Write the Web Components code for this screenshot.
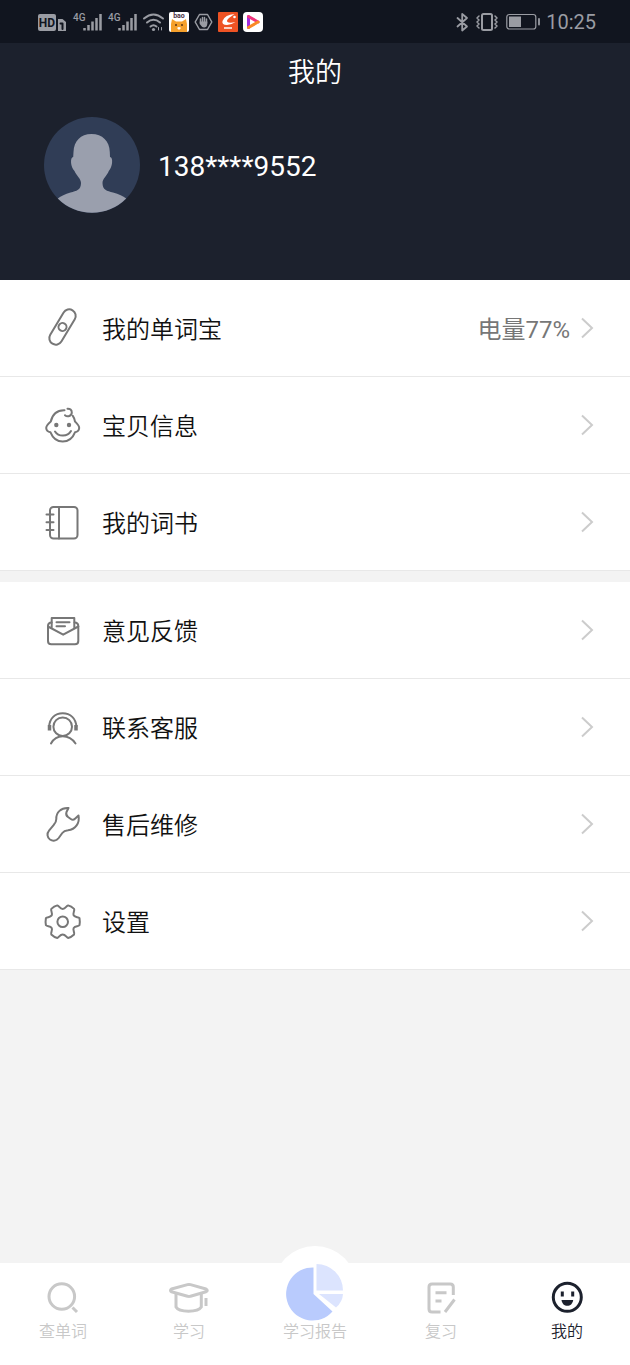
<!DOCTYPE html>
<html lang="zh-CN">
<head>
<meta charset="utf-8">
<meta name="viewport" content="width=device-width, initial-scale=1">
<title>我的</title>
<style>
  html, body { margin: 0; }
  body {
    font-family: Roboto, "Noto Sans CJK SC", sans-serif;
    background: #f3f3f3;
  }
</style>
</head>
<body>
<profile-page>
  <status-bar slot="top" time="10:25"></status-bar>
  <profile-header slot="top" heading="我的" name="138****9552"></profile-header>

  <menu-group>
    <menu-row icon="pen" href="#device" label="我的单词宝">电量77%</menu-row>
    <menu-row icon="baby" href="#baby" label="宝贝信息"></menu-row>
    <menu-row icon="book" href="#books" label="我的词书"></menu-row>
  </menu-group>
  <menu-group>
    <menu-row icon="mail" href="#feedback" label="意见反馈"></menu-row>
    <menu-row icon="service" href="#service" label="联系客服"></menu-row>
    <menu-row icon="wrench" href="#repair" label="售后维修"></menu-row>
    <menu-row icon="gear" href="#settings" label="设置"></menu-row>
  </menu-group>

  <tab-bar slot="bottom">
    <tab-item icon="search" href="#search">查单词</tab-item>
    <tab-item icon="study" href="#study">学习</tab-item>
    <tab-item icon="report" href="#report" raised>学习报告</tab-item>
    <tab-item icon="review" href="#review">复习</tab-item>
    <tab-item icon="me" href="#me" active>我的</tab-item>
  </tab-bar>
</profile-page>

<script>
const ICONS = {
  // menu icons, 36x36
  pen: [36, 36, `
    <g transform="translate(18.5 17) rotate(31)">
      <rect x="-6.5" y="-19.500" width="13" height="39" rx="6.5"/><circle r="4"/>
    </g>`],
  baby: [36, 36, `
    <path d="M20.500 3.200C13.500 3 8.500 7 6.800 14.500C4.500 16.500 2.200 18.500 2.200 21C2.400 23.800 4.500 25 6.500 25.300C9 31.500 13.500 34.500 18.700 34.500S28.500 31.500 31 25.300C33 25 35 23.800 35.200 21C35.200 18.500 33 16.500 31 14.500C30.600 12 29.800 10.200 28.800 8.800"/>
    <path d="M21 8.200C23.500 10.500 27.800 9 27.800 5.500C27.800 3 26 1.500 23.500 1.700"/>
    <path d="M11 24.500C14.500 30 23.500 30 27 24"/>
    <g fill="currentColor" stroke="none"><circle cx="12.300" cy="18" r="2.200"/><circle cx="25" cy="18" r="2.200"/></g>`],
  book: [36, 36, `
    <rect x="6" y="3" width="27.500" height="31.500" rx="3.500"/>
    <path d="M15 3V34.500M2.500 10.500H9.500M2.500 18.200H9.500M2.500 26H9.500"/>`],
  mail: [36, 36, `
    <path d="M7.700 10.500C5.500 10.500 4 12 4 14V29C4 31 5.300 32.300 7.300 32.300H31C33 32.300 34.300 31 34.300 29V14C34.300 12 33 10.500 30.500 10.500"/>
    <path d="M4 14.500L19.200 22.700L34.300 14.500M7.700 16V6H30.300V16M12.500 10.200H25.500M12.500 14.200H21"/>`],
  service: [36, 36, `
    <circle cx="18.700" cy="17.700" r="9.300"/>
    <path d="M5.200 17.500C5.500 9.500 11 4.300 18.700 4.300S32 9.500 32.300 17.500M7 34.500C9.500 30 13.500 27.300 18.700 27.300S28.500 30 31.500 34.500"/>
    <path d="M5.500 16V21.500M32 16V21.500" stroke-width="3.500" stroke-linecap="butt"/>`],
  wrench: [36, 36, `
    <path d="M24.500 2C17 1.500 12 6.500 12.300 13C12.300 15.500 11.500 17 9.800 18.800L5.200 24.300C2.500 27.500 3.200 31.500 6 33.500C9 35.500 12.500 34.800 14.700 32L18.300 27C19.800 25 21.500 24.500 24 24.300C31.500 23.500 36 17 34.500 9.500L31 12.800C29.800 13.900 28.200 14 26.800 13L24 11C22.200 9.700 21.800 8 22.500 6Z"/>`],
  gear: [36, 36, `
    <g transform="translate(18.700 18.700)">
      <path d="M16.800-3.500Q17.400 0 16.800 3.500C15.500 5 12.500 4 11 6.300C9.800 8.500 12.300 11 11.400 12.800Q8.600 15.500 5.400 16.300C3.500 16 3 12.700 0 12.700S-3.500 16-5.400 16.300Q-8.600 15.500-11.400 12.800C-12.300 11-9.800 8.500-11 6.300C-12.500 4-15.500 5-16.800 3.500Q-17.400 0-16.800-3.500C-15.500-5-12.500-4-11-6.300C-9.800-8.500-12.300-11-11.400-12.800Q-8.600-15.500-5.400-16.300C-3.500-16-3-12.700 0-12.700S3.500-16 5.400-16.300Q8.600-15.500 11.400-12.800C12.300-11 9.800-8.500 11-6.300C12.500-4 15.500-5 16.800-3.500Z"/>
      <circle r="5.300"/>
    </g>`],
  arrow: [14, 22, `<path d="M2 1.500L12 11L2 20.500" stroke-linecap="butt" stroke-linejoin="miter"/>`],

  // tab icons, 40x32
  search: [40, 32, `
    <circle cx="18.800" cy="14.500" r="12.800"/><path d="M29.500 25.500L34 30" stroke-linecap="butt"/>`],
  study: [40, 32, `
    <path d="M2.500 7L18.500 2.600Q20 2.200 21.500 2.600L37 7Q39.500 8.400 37 9.800L21.500 14.200Q20 14.700 18.500 14.200L2.500 9.800Q.500 8.400 2.500 7Z"/>
    <path d="M7 12V25C10 30.500 29 30.500 32.300 25V12"/><path d="M37 16V24" stroke-linecap="butt"/>`],
  review: [40, 32, `
    <path d="M32.300 13V5Q32.300 2 29.300 2H11Q8 2 8 5V27Q8 30 11 30H19.500M24 30L33.500 17.500M14.500 10.700H25.500M14.500 19H20.500" stroke-linecap="butt"/>`],
  me: [40, 32, `
    <circle cx="20.300" cy="15.300" r="14"/>
    <path d="M15.300 9.500V14.500M25.700 9.500V14.500" stroke-linecap="butt"/>
    <path d="M14.500 18H26.200C25.500 22 23.300 23.800 20.300 23.800S15.200 22 14.500 18Z" fill="currentColor" stroke="none"/>`],
  report: [60, 60, `
    <g stroke="none">
      <path d="M28.500 5.500A26.500 26.500 0 1 0 47.500 49.500L28.500 32Z" fill="#b9cbfd"/>
      <path d="M31.500 2A26.500 26.500 0 0 1 58 28.500H31.500Z" fill="#dce4fe"/>
      <path d="M34 32H58Q57.500 40 51 45.500Z" fill="#dce4fe"/>
    </g>`],

  // status bar glyphs
  hd: [30, 20, `
    <rect y="2" width="18" height="17" rx="2" fill="currentColor" stroke="none"/>
    <text x="9" y="15" font-size="12" font-weight="700" text-anchor="middle" fill="#11151f" stroke="none">HD</text>
    <path d="M20 7H24.500L28 10V19H20Z" fill="currentColor" stroke="none"/>
    <path d="M22.500 11.500H24.500V17" stroke="#11151f"/>`],
  signal: [30, 20, `
    <text x="0" y="9" font-size="10" font-weight="500" fill="currentColor" stroke="none">4G</text>
    <path d="M11.500 18.500V16M15.500 18.500V13M19.500 18.500V9.500M23.500 18.500V6M27.500 18.500V2" stroke-width="2.500" stroke-linecap="butt"/>`],
  wifi: [21, 20, `
    <path d="M1 6.500Q10.500-1.500 20 6.500M4 10.500Q10.500 5 17 10.500M7.500 14.500Q10.500 12 13.500 14.500"/>
    <circle cx="10.500" cy="17.500" r="1.600" fill="currentColor" stroke="none"/>
    <path d="M15.500 18V15.500M18.500 15.500V18" stroke-width="1"/>`],
  fox: [20, 20, `
    <g stroke="none">
      <rect width="20" height="20" rx="2" fill="#fff"/>
      <text x="10" y="6" font-size="7" font-weight="700" text-anchor="middle" fill="#4b3045">bao</text>
      <path d="M2 20V12L3 7L7 9.500H13L17 7L18 12V20Z" fill="#f5a02c"/>
      <circle cx="7" cy="13" r="1" fill="#5a3512"/><circle cx="13" cy="13" r="1" fill="#5a3512"/>
      <path d="M8 16Q10 14 12 16L10 18Z" fill="#fff"/>
    </g>`],
  hand: [19, 20, `
    <path d="M5.500 2.500H13.500L17.800 10L13.500 17.500H5.500L1.200 10Z" stroke-width="1.500"/>
    <path d="M6.500 11V7M8.500 10V5.500M10.500 10V5.500M12.500 11V7" stroke-width="1.500"/>
    <path d="M5.700 9.500H13.300V12Q13 15.500 10 15.500Q8 15.500 5.700 12Z" fill="currentColor" stroke="none"/>`],
  orange: [20, 20, `
    <g stroke="none">
      <rect width="20" height="20" rx="1" fill="#ee5324"/>
      <path d="M16.500 2Q7 2.500 4.500 9Q3.500 13 9 13Q13 13 17.500 10Q11.500 11.300 9.500 10Q8 8.500 11 6Q13 4.500 16.500 2Z" fill="#fff"/>
      <circle cx="16.500" cy="5" r="1.300" fill="#fff"/>
      <rect x="6" y="15" width="8" height="2" fill="#fbd2c4"/>
    </g>`],
  play: [20, 20, `
    <rect width="20" height="20" rx="4" fill="#fff" stroke="none"/>
    <path d="M5.500 4.500V15.500" stroke="#a02be0" stroke-width="3"/>
    <path d="M5.500 4.500L15 10" stroke="#f0357d" stroke-width="3"/>
    <path d="M15 10L5.500 15.500" stroke="#f98a24" stroke-width="3"/>`],
  bluetooth: [14, 20, `
    <path d="M2.500 6L12 14.500L7.200 18.500V2L12 6L2.500 14.500" stroke-width="1.800"/>`],
  vibrate: [25, 20, `
    <rect x="7" y="2" width="10" height="16" rx="1.500"/>
    <path d="M4 4L2 6L4 8L2 10L4 12L2 14L4 16M20 4L22 6L20 8L22 10L20 12L22 14L20 16" stroke-width="1.500"/>`],
  battery: [34, 20, `
    <rect x=".8" y="2.500" width="29" height="14.500" rx="2.500" stroke-width="1.200"/>
    <rect x="3" y="4.500" width="12" height="10.500" fill="currentColor" stroke="none"/>
    <path d="M33 7V12.500" stroke-width="1.800"/>`],
  avatar: [96, 96, `
    <g stroke="none">
      <circle cx="48" cy="48" r="48" fill="#303d56"/>
      <path d="M47.500 17C58.500 17 65.500 24 65.800 35L66 40C69.500 40.500 68.500 50 64.800 54C63 59 58.500 61.500 58.500 66C58.500 73 63 74 69 75.500C75 77 79 79 82.200 81.500A48 48 0 0 1 13.800 81.500C17 79 21 77 26.500 75.500C32.500 74 37 73 37 66C37 61.500 32.500 59 30.500 54C26.500 50 25.800 40.500 29.200 40L29.500 35C30 24 36.500 17 47.500 17Z" fill="#9a9fad"/>
    </g>`]
}

class AppIcon extends HTMLElement {
  connectedCallback() {
    const [w, h, body] = ICONS[this.getAttribute('name')]
    if (!this.shadowRoot) this.attachShadow({ mode: 'open' })
    this.shadowRoot.innerHTML = `
      <style>
        :host { display: block; flex: none; }
        svg {
          display: block;
          overflow: visible;
          fill: none;
          stroke: currentColor;
          stroke-width: var(--icon-stroke, 2);
          stroke-linecap: round;
          stroke-linejoin: round;
        }
      </style>
      <svg width="${w}" height="${h}" viewBox="0 0 ${w} ${h}" aria-hidden="true">${body}</svg>`
  }
}

class ProfilePage extends HTMLElement {
  constructor() {
    super()
    this.attachShadow({ mode: 'open' }).innerHTML = `
      <style>
        :host { display: flex; flex-direction: column; min-height: 100vh; }
        main { flex: 1; display: flex; flex-direction: column; gap: 11px; }
      </style>
      <slot name="top"></slot>
      <main><slot></slot></main>
      <slot name="bottom"></slot>`
  }
}

class StatusBar extends HTMLElement {
  connectedCallback() {
    const icons = names => names.map(n => `<app-icon name="${n}"></app-icon>`).join('')
    this.attachShadow({ mode: 'open' }).innerHTML = `
      <style>
        :host {
          display: flex;
          align-items: center;
          justify-content: space-between;
          height: 43px;
          padding: 0 34px 0 38px;
          background: #11151f;
          color: #9a9ca3;
        }
        div { display: flex; align-items: center; }
        .left { gap: 5px; }
        .right { gap: 6px; }
        time { font-size: 20px; line-height: 24px; }
      </style>
      <div class="left">${icons(['hd', 'signal', 'signal', 'wifi', 'fox', 'hand', 'orange', 'play'])}</div>
      <div class="right">${icons(['bluetooth', 'vibrate', 'battery'])}<time>${this.getAttribute('time')}</time></div>`
  }
}

class ProfileHeader extends HTMLElement {
  connectedCallback() {
    this.attachShadow({ mode: 'open' }).innerHTML = `
      <style>
        :host { display: block; padding: 10px 44px 67px; background: #1c212d; color: #fff; }
        h1 { margin: 0 0 24px; font-size: 27px; line-height: 40px; font-weight: 350; text-align: center; }
        .user { display: flex; align-items: center; gap: 18px; font-size: 28px; line-height: 40px; }
        .user span { padding-top: 4px; }
      </style>
      <h1>${this.getAttribute('heading')}</h1>
      <div class="user"><app-icon name="avatar"></app-icon><span>${this.getAttribute('name')}</span></div>`
  }
}

class MenuGroup extends HTMLElement {
  constructor() {
    super()
    this.attachShadow({ mode: 'open' }).innerHTML = `
      <style>
        :host { display: block; background: #fff; }
      </style>
      <slot></slot>`
  }
}

class MenuRow extends HTMLElement {
  connectedCallback() {
    this.attachShadow({ mode: 'open' }).innerHTML = `
      <style>
        :host { display: block; border-bottom: 1px solid #e8e8e8; }
        a {
          display: flex;
          align-items: center;
          height: 96px;
          padding: 0 36px 0 44px;
          color: #111;
          font-size: 24px;
          font-weight: 350;
          line-height: 36px;
          text-decoration: none;
        }
        .icon { margin-right: 22px; color: #777; }
        .label, .value { padding-top: 4px; }
        .label { flex: 1; }
        .value { margin-right: 10px; color: #777; font-weight: 400; }
        .arrow { color: #ccc; }
      </style>
      <a href="${this.getAttribute('href')}">
        <app-icon class="icon" name="${this.getAttribute('icon')}"></app-icon>
        <span class="label">${this.getAttribute('label')}</span>
        <span class="value"><slot></slot></span>
        <app-icon class="arrow" name="arrow"></app-icon>
      </a>`
  }
}

class TabBar extends HTMLElement {
  constructor() {
    super()
    this.attachShadow({ mode: 'open' }).innerHTML = `
      <style>
        :host { display: block; background: #fff; }
        nav { display: grid; grid-template-columns: repeat(5, 1fr); }
      </style>
      <nav><slot></slot></nav>`
  }
}

class TabItem extends HTMLElement {
  connectedCallback() {
    this.attachShadow({ mode: 'open' }).innerHTML = `
      <style>
        :host { display: block; color: #c8c8c8; --icon-stroke: 3; }
        :host([active]) { color: #1c212d; }
        a {
          position: relative;
          display: flex;
          flex-direction: column;
          align-items: center;
          gap: 8px;
          padding: 19px 0 23px;
          color: inherit;
          font-size: 16px;
          font-weight: 350;
          line-height: 20px;
          text-decoration: none;
        }
        .label { position: relative; }
        .icon { height: 32px; }
        /* the middle tab sits on a disc that rises above the bar */
        :host([raised]) .icon {
          position: absolute;
          top: -17px;
          left: 50%;
          box-sizing: border-box;
          width: 84px;
          height: 84px;
          padding: 16px 12px;
          border-radius: 50%;
          background: #fff;
          transform: translateX(-50%);
        }
        :host([raised]) .label { margin-top: 40px; }
      </style>
      <a href="${this.getAttribute('href')}">
        <app-icon class="icon" name="${this.getAttribute('icon')}"></app-icon>
        <span class="label"><slot></slot></span>
      </a>`
  }
}

customElements.define('app-icon', AppIcon)
customElements.define('profile-page', ProfilePage)
customElements.define('status-bar', StatusBar)
customElements.define('profile-header', ProfileHeader)
customElements.define('menu-group', MenuGroup)
customElements.define('menu-row', MenuRow)
customElements.define('tab-bar', TabBar)
customElements.define('tab-item', TabItem)
</script>
</body>
</html>
